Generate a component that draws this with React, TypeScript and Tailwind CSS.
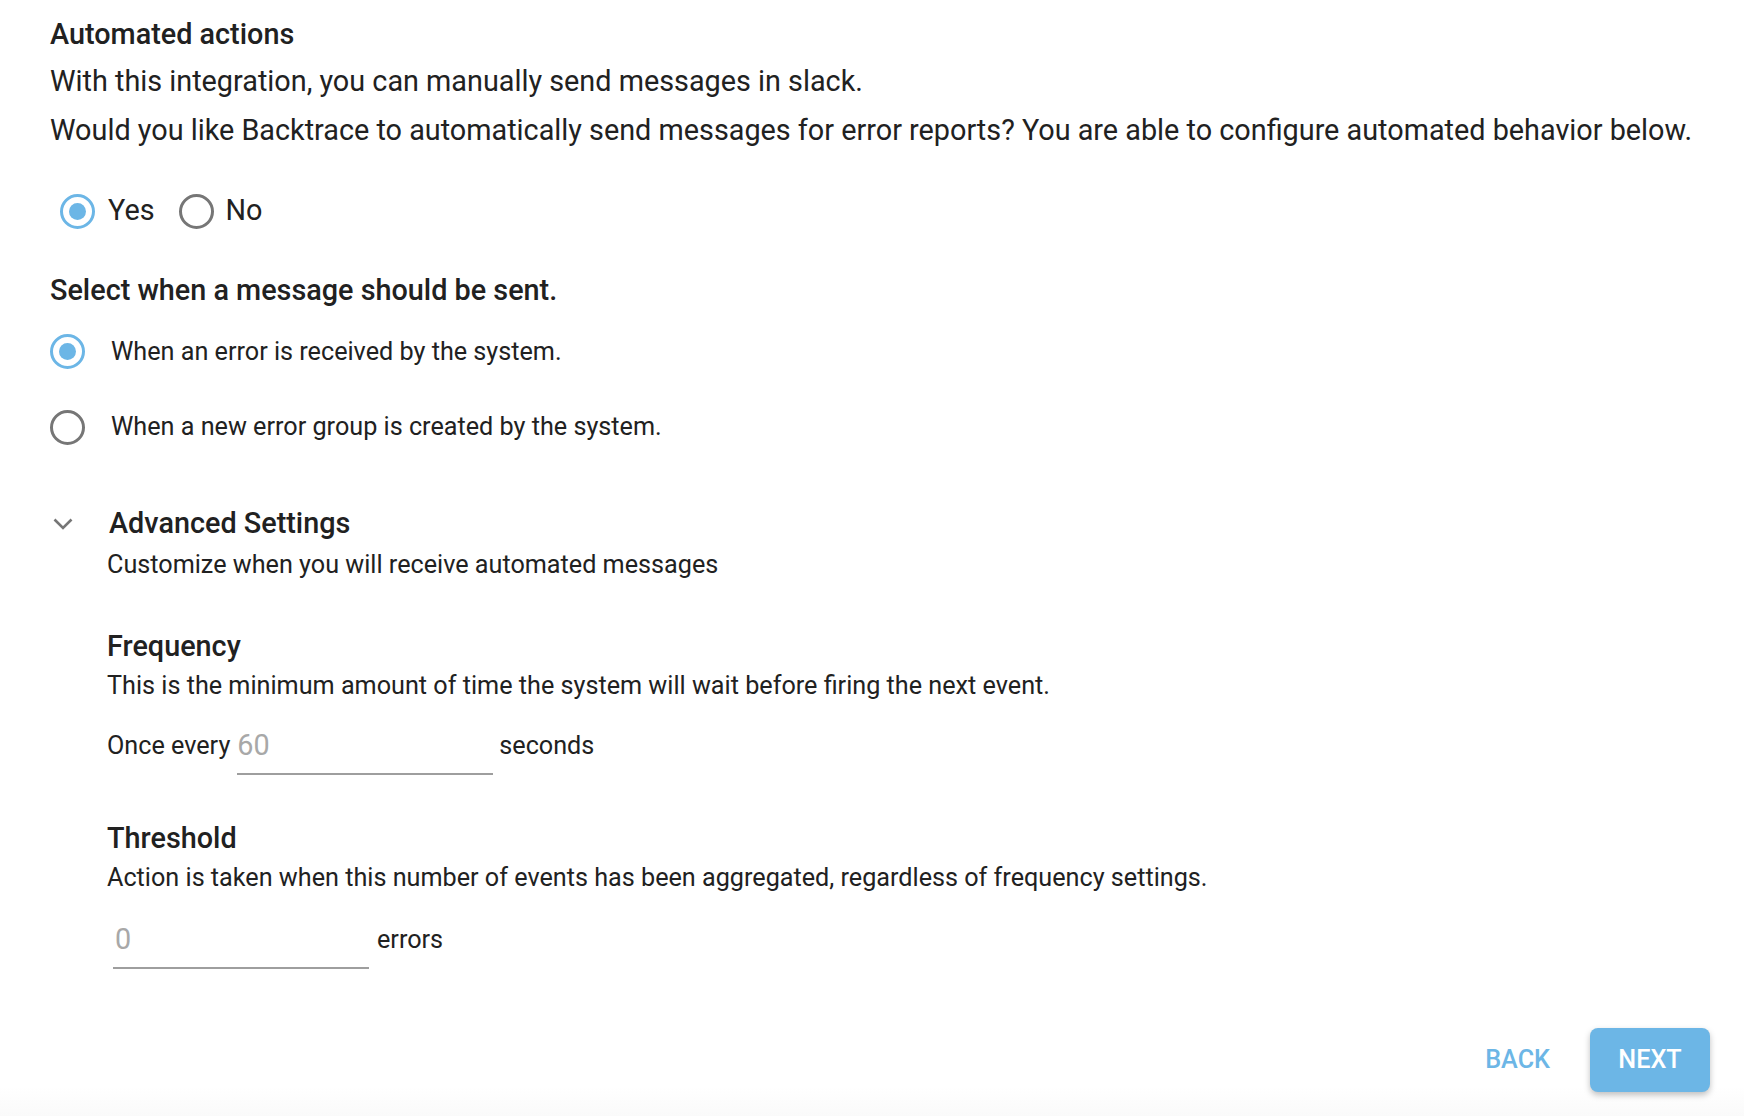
import React from "react";

function Radio({ checked }: { checked: boolean }) {
  return (
    <span
      className={
        checked
          ? "flex h-[35px] w-[35px] shrink-0 items-center justify-center rounded-full border-[3.5px] border-[#6cb6e6]"
          : "flex h-[35px] w-[35px] shrink-0 items-center justify-center rounded-full border-[3.5px] border-[#767676]"
      }
    >
      {checked && <span className="h-[17px] w-[17px] rounded-full bg-[#6cb6e6]" />}
    </span>
  );
}

export default function App() {
  return (
    <div className="relative flex h-[1116px] w-[1744px] flex-col bg-[linear-gradient(to_bottom,#ffffff_1086px,#fafafa_1116px)] font-['Roboto',sans-serif] text-[#212121]">
      <div className="flex flex-col pl-[50px] pt-[16px]">
        <div className="text-[28.8px] font-medium leading-[36px]">Automated actions</div>
        <div className="mt-[5px] text-[28.8px] leading-[48px]">
          With this integration, you can manually send messages in slack.
        </div>
        <div className="mt-[1px] text-[28.8px] leading-[49px]">
          Would you like Backtrace to automatically send messages for error reports? You are able to configure automated behavior below.
        </div>

        <div className="mt-[38px] flex h-[36px] items-center pl-[10px] text-[28.8px]">
          <Radio checked />
          <span className="ml-[13px]">Yes</span>
          <span className="ml-[24px]">
            <Radio checked={false} />
          </span>
          <span className="ml-[12px]">No</span>
        </div>

        <div className="mt-[43px] text-[28.8px] font-medium leading-[36px]">
          Select when a message should be sent.
        </div>

        <div className="mt-[23px] flex h-[40px] items-center text-[25.2px]">
          <Radio checked />
          <span className="ml-[26px] pt-[2px]">When an error is received by the system.</span>
        </div>
        <div className="mt-[36px] flex h-[40px] items-center text-[25.2px]">
          <Radio checked={false} />
          <span className="ml-[26px]">When a new error group is created by the system.</span>
        </div>

        <div className="mt-[57px] flex h-[40px] items-center">
          <span className="flex w-[59px] shrink-0 items-center pl-[3px]">
            <svg width="20" height="12" viewBox="0 0 20 12">
              <polyline
                points="1.5,1.5 10,10 18.5,1.5"
                fill="none"
                stroke="#767676"
                strokeWidth="2.6"
              />
            </svg>
          </span>
          <span className="text-[28.8px] font-medium">Advanced Settings</span>
        </div>

        <div className="flex flex-col pl-[57px]">
          <div className="mt-[3px] text-[25.2px] leading-[36px]">
            Customize when you will receive automated messages
          </div>

          <div className="mt-[45px] text-[28.8px] font-medium leading-[36px]">Frequency</div>
          <div className="mt-[4px] text-[25.2px] leading-[36px]">
            This is the minimum amount of time the system will wait before firing the next event.
          </div>
          <div className="mt-[13px] flex items-center text-[25.2px]">
            <span>Once every</span>
            <input
              className="ml-[7px] h-[58px] w-[256px] border-b-2 border-[#9e9e9e] bg-transparent text-[28.8px] text-[#9e9e9e] outline-none placeholder:text-[#a8a8a8]"
              placeholder="60"
            />
            <span className="ml-[6px]">seconds</span>
          </div>

          <div className="mt-[45px] text-[28.8px] font-medium leading-[36px]">Threshold</div>
          <div className="mt-[4px] text-[25.2px] leading-[36px]">
            Action is taken when this number of events has been aggregated, regardless of frequency settings.
          </div>
          <div className="mt-[15px] flex items-center pl-[6px] text-[25.2px]">
            <input
              className="h-[58px] w-[256px] border-b-2 border-[#9e9e9e] bg-transparent pl-[2px] text-[28.8px] text-[#9e9e9e] outline-none placeholder:text-[#a8a8a8]"
              placeholder="0"
            />
            <span className="ml-[8px]">errors</span>
          </div>
        </div>
      </div>

      <div className="mt-auto flex items-center justify-end gap-[24px] pb-[24px] pr-[34px]">
        <button className="h-[64px] px-[16px] text-[25.2px] font-medium text-[#6cb6e6]">BACK</button>
        <button className="h-[64px] w-[120px] rounded-[8px] bg-[#6cb6e6] text-[25.2px] font-medium text-white shadow-[0_3px_6px_rgba(0,0,0,0.25)]">
          NEXT
        </button>
      </div>
    </div>
  );
}
